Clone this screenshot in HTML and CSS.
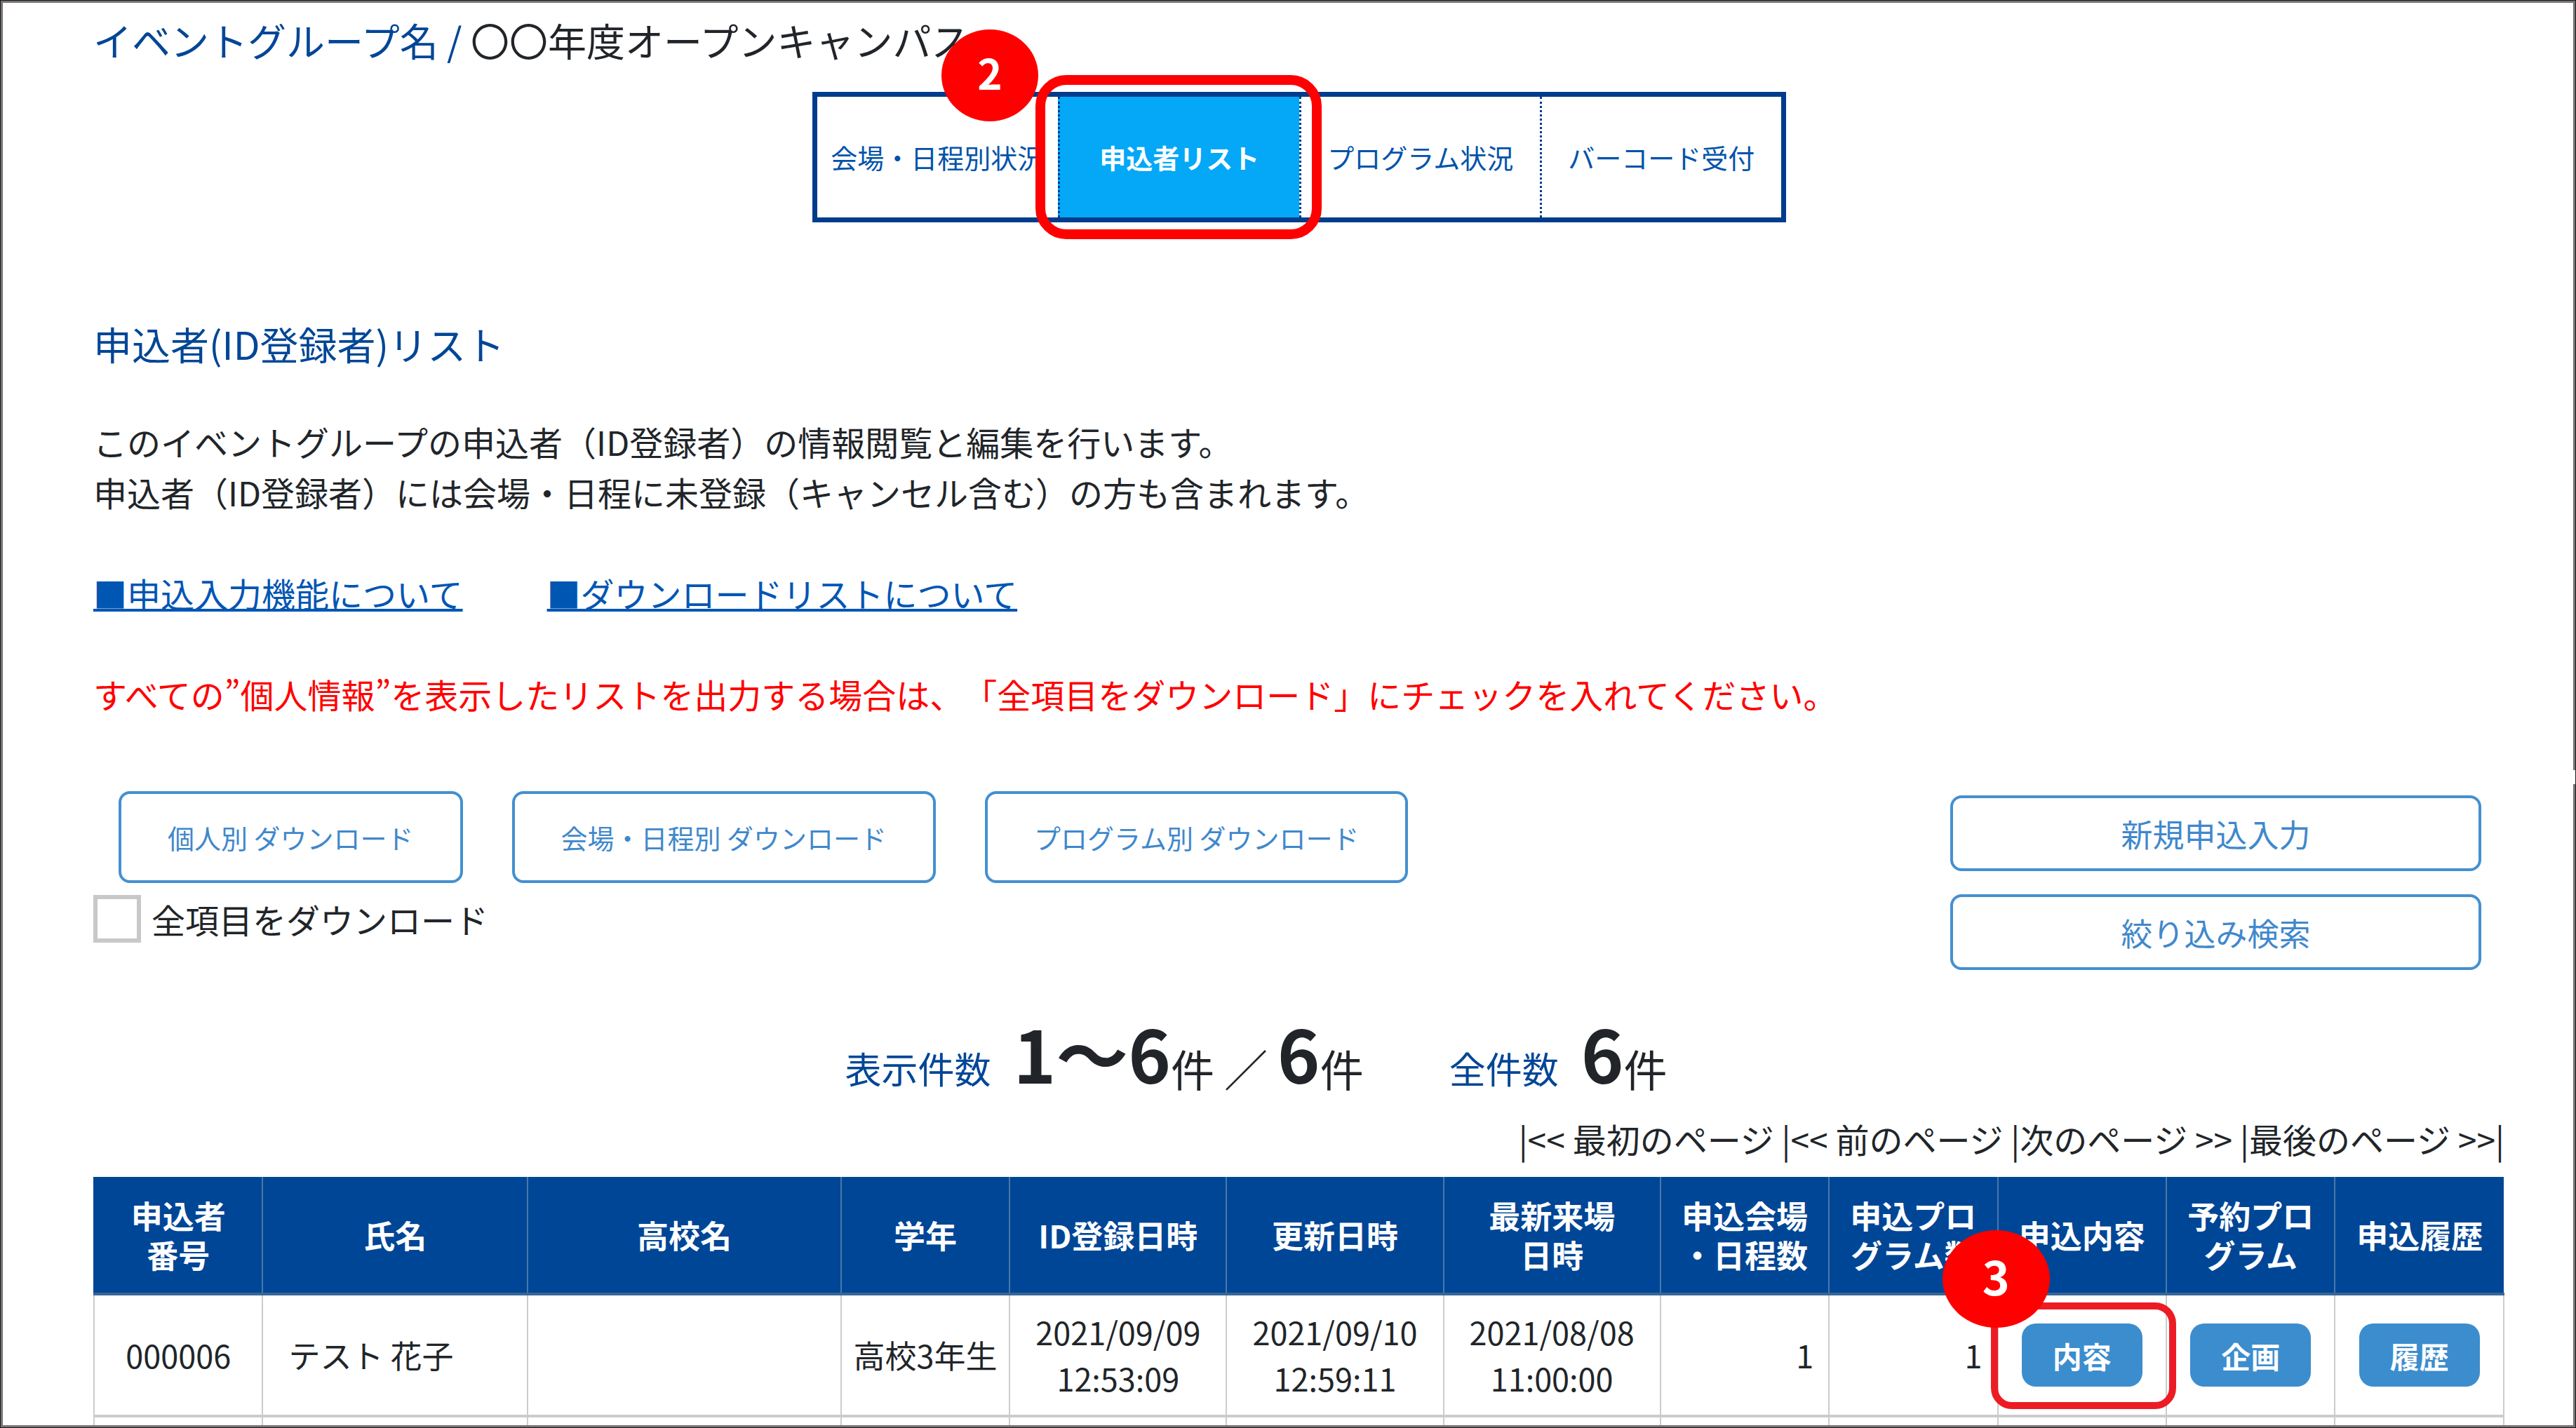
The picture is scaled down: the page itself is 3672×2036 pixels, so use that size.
FILE: index.html
```html
<!DOCTYPE html>
<html lang="ja">
<head>
<meta charset="utf-8">
<title>申込者(ID登録者)リスト</title>
<link rel="stylesheet" href="styles.css">
</head>
<body>
<div class="frame">
<main class="page">
  <h1 class="title"><span class="title-label">イベントグループ名 /</span> 〇〇年度オープンキャンパス</h1>

  <nav class="tabs">
    <a class="tab" href="#venue">会場・日程別状況</a>
    <a class="tab tab-active" href="#list">申込者リスト<span class="mark mark-tab"></span><span class="badge badge-tab">2</span></a>
    <a class="tab" href="#program">プログラム状況</a>
    <a class="tab" href="#barcode">バーコード受付</a>
  </nav>

  <h2 class="heading">申込者(ID登録者)リスト</h2>
  <p class="text">このイベントグループの申込者（ID登録者）の情報閲覧と編集を行います。<br>申込者（ID登録者）には会場・日程に未登録（キャンセル含む）の方も含まれます。</p>
  <div class="help">
    <a href="#about-entry">■申込入力機能について</a>
    <a href="#about-download">■ダウンロードリストについて</a>
  </div>
  <p class="text notice">すべての”個人情報”を表示したリストを出力する場合は、「全項目をダウンロード」にチェックを入れてください。</p>

  <div class="toolbar">
    <div class="downloads">
      <div class="download-buttons">
        <button class="btn btn-download" type="button">個人別 ダウンロード</button>
        <button class="btn btn-download" type="button">会場・日程別 ダウンロード</button>
        <button class="btn btn-download" type="button">プログラム別 ダウンロード</button>
      </div>
      <div class="check">
        <input class="check-box" type="checkbox" id="all-items">
        <label for="all-items">全項目をダウンロード</label>
      </div>
    </div>
    <div class="actions">
      <button class="btn btn-action" type="button">新規申込入力</button>
      <button class="btn btn-action" type="button">絞り込み検索</button>
    </div>
  </div>

  <div class="counts">
    <div class="count"><span class="count-label">表示件数</span><b>1〜6</b>件 ／ <b>6</b>件</div>
    <div class="count"><span class="count-label">全件数</span><b>6</b>件</div>
  </div>

  <div class="pager">|&lt;&lt; 最初のページ |&lt;&lt; 前のページ |次のページ &gt;&gt; |最後のページ &gt;&gt;|</div>

  <table class="list">
    <colgroup>
      <col class="c-narrow"><col class="c-name"><col class="c-school"><col class="c-narrow">
      <col class="c-date"><col class="c-date"><col class="c-date">
      <col class="c-narrow"><col class="c-narrow"><col class="c-narrow"><col class="c-narrow"><col class="c-narrow">
    </colgroup>
    <thead>
      <tr>
        <th>申込者<br>番号</th><th>氏名</th><th>高校名</th><th>学年</th><th>ID登録日時</th><th>更新日時</th><th>最新来場<br>日時</th>
        <th>申込会場<br>・日程数</th><th>申込プロ<br>グラム数</th><th>申込内容</th><th>予約プロ<br>グラム</th><th>申込履歴</th>
      </tr>
    </thead>
    <tbody>
      <tr>
        <td>000006</td><td class="left">テスト 花子</td><td></td><td>高校3年生</td>
        <td>2021/09/09<br>12:53:09</td><td>2021/09/10<br>12:59:11</td><td>2021/08/08<br>11:00:00</td>
        <td class="num">1</td><td class="num">1</td>
        <td><div class="cell-action"><button class="btn-row" type="button">内容</button><span class="mark mark-row"></span><span class="badge badge-row">3</span></div></td>
        <td><div class="cell-action"><button class="btn-row" type="button">企画</button></div></td>
        <td><div class="cell-action"><button class="btn-row" type="button">履歴</button></div></td>
      </tr>
      <tr class="row-next"><td></td><td></td><td></td><td></td><td></td><td></td><td></td><td></td><td></td><td></td><td></td><td></td></tr>
    </tbody>
  </table>
</main>
</div>
<span class="notch"></span>
</body>
</html>
```
FILE: styles.css
```css
* { box-sizing: border-box; }

body {
  position: relative;
  margin: 0;
  border: 1px solid #1c1a1c;
  background: #fff;
  color: #212529;
  font-family: "Noto Sans CJK JP", "Noto Sans", sans-serif;
  font-size: 48px;
  line-height: 72px;
  height: 100vh;
  text-spacing-trim: space-all;
}

.frame {
  height: 100%;
  overflow: hidden;
  border: 3px solid #777274;
}

/* Gap in the right edge of the frame */
.notch {
  position: absolute;
  top: 1097px;
  right: -1px;
  width: 4px;
  height: 20px;
  background: #fff;
}

.page { padding: 12px 98px 0 129px; }

h1, h2, p { margin: 0; font-weight: 400; }

.title, .heading { font-size: 55px; line-height: 80px; }
.title-label, .heading { color: #004696; }

/* Tabs */
.tabs {
  display: grid;
  grid-template-columns: repeat(4, 1fr);
  width: 1388px;
  height: 186px;
  margin: 35px auto 0;
  border: 7px solid #003c8c;
}
.tab {
  position: relative;
  display: flex;
  align-items: center;
  justify-content: center;
  color: #0053aa;
  font-size: 38px;
  white-space: nowrap;
  text-decoration: none;
}
.tab + .tab { border-left: 3px dotted #003c8c; }
.tab-active {
  z-index: 1;
  background: #04a8f7;
  color: #fff;
  font-weight: 700;
}

/* Numbered call-outs */
.mark { position: absolute; pointer-events: none; }
.badge {
  position: absolute;
  display: flex;
  align-items: center;
  justify-content: center;
  padding-bottom: 12px;
  border-radius: 50%;
  background: #f00;
  color: #fff;
  font-weight: 700;
}
.mark-tab { inset: -31px -32px -31px -35px; border: 14px solid #f00; border-radius: 44px; }
.badge-tab { left: -169px; top: -96px; width: 138px; height: 131px; font-size: 60px; }
.mark-row { inset: -30px -48px -32px -44px; border: 10px solid #ed1c24; border-radius: 30px; }
.badge-row { left: -113px; top: -133px; width: 153px; height: 139px; font-size: 66px; }

.heading { margin-top: 132px; }
.text { margin-top: 72px; }
.heading + .text { margin-top: 64px; }
.notice { color: #f00; }

.help { display: flex; gap: 120px; margin-top: 72px; }
.help a { color: #0056b3; text-decoration-thickness: 4px; }

/* Toolbar */
.toolbar {
  display: flex;
  justify-content: space-between;
  align-items: flex-start;
  margin-top: 103px;
}
.download-buttons { display: flex; gap: 70px; margin-left: 36px; }
.btn {
  border: 4px solid #4490d0;
  border-radius: 16px;
  background: #fff;
  color: #4088cc;
  font-family: inherit;
}
.btn-download { height: 131px; padding: 0 66px; font-size: 38px; }
.check { display: flex; align-items: center; gap: 15px; margin-top: 17px; line-height: 68px; }
.check-box {
  appearance: none;
  width: 68px;
  height: 68px;
  margin: 0;
  border: 6px solid #c8c8c8;
  background: #fff;
}
.actions {
  display: flex;
  flex-direction: column;
  gap: 33px;
  width: 790px;
  padding: 6px 33px 0 0;
}
.btn-action { height: 108px; font-size: 45px; }

/* Counts and pager */
.counts { display: flex; justify-content: center; height: 120px; margin-top: 58px; }
.count { margin-right: 122px; font-size: 62px; line-height: 60px; }
.count-label { margin-right: 32px; color: #004696; font-size: 52px; vertical-align: 5px; }
.count b { font-size: 103px; line-height: 120px; vertical-align: 5px; }
.pager { margin-top: 26px; text-align: right; }

/* List table */
.list {
  width: 100%;
  margin-top: 19px;
  table-layout: fixed;
  border-collapse: collapse;
  font-size: 45px;
}
.c-narrow { width: 7%; }
.c-name { width: 11%; }
.c-school { width: 13%; }
.c-date { width: 9%; }
.list th {
  height: 167px;
  padding: 0;
  border-left: 2px solid #4a78a8;
  border-bottom: 4px solid #3a6594;
  background: #004696;
  color: #fff;
  font-weight: 700;
  line-height: 56px;
}
.list th:first-child { border-left-color: #004696; }
.list td {
  height: 174px;
  padding: 0;
  border: 2px solid #ccc;
  border-bottom-width: 4px;
  line-height: 66px;
  text-align: center;
  white-space: nowrap;
}
.list .left { padding-left: 36px; text-align: left; }
.list .num { padding-right: 21px; text-align: right; }
.cell-action { position: relative; width: 172px; height: 90px; margin: 0 auto; }
.btn-row {
  display: block;
  width: 100%;
  height: 100%;
  padding: 0;
  border: 0;
  border-radius: 20px;
  background: #3c8dcd;
  color: #fff;
  font-family: inherit;
  font-size: 42px;
  font-weight: 700;
}
```
